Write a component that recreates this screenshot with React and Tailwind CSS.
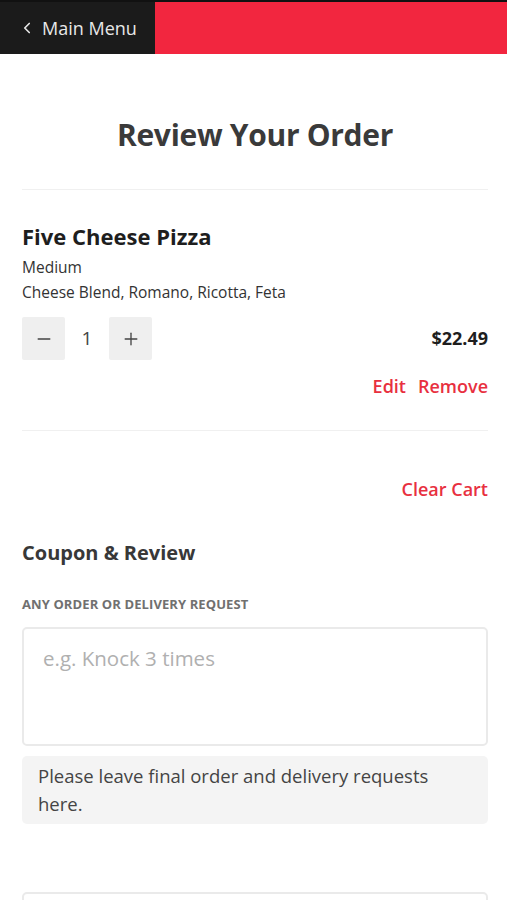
import { ChevronLeft, Minus, Plus } from 'lucide-react';

const font = { fontFamily: '"Open Sans", "Noto Sans", sans-serif' };

export default function App() {
  return (
    <div className="min-h-screen bg-white text-[#222]" style={font}>
      {/* Top bar */}
      <header className="flex h-[54px] border-t-2 border-[#111]">
        <button className="flex w-[155px] items-center gap-1.5 bg-[#1b1b1b] pl-[18px] text-[18px] text-[#e8e8e8]">
          <ChevronLeft className="h-[18px] w-[18px]" strokeWidth={2.2} />
          <span>Main Menu</span>
        </button>
        <div className="flex-1 bg-[#f2263f]" />
      </header>

      <div className="pl-[22px] pr-[19px]">
        <h1 className="pt-[61px] pb-[34px] text-center text-[30px] leading-[40px] font-bold tracking-[-0.3px] text-[#3a3a3a]">
          Review Your Order
        </h1>
        <hr className="border-t border-[#f0f0f0]" />

        {/* Cart item */}
        <div className="pt-[31px] pb-[32px]">
          <h2 className="text-[22px] font-bold leading-[30px] text-[#1e1e1e]">Five Cheese Pizza</h2>
          <p className="mt-[4px] text-[15.5px] leading-[25px] text-[#333]">Medium</p>
          <p className="text-[15.5px] leading-[25px] text-[#333]">Cheese Blend, Romano, Ricotta, Feta</p>

          <div className="mt-[12px] flex items-center justify-between">
            <div className="flex items-center">
              <button className="flex h-[43px] w-[43px] items-center justify-center rounded-[2px] bg-[#efefef] text-[#444]">
                <Minus className="h-5 w-5" strokeWidth={1.6} />
              </button>
              <span className="w-[44px] text-center text-[19px] text-[#444]">1</span>
              <button className="flex h-[43px] w-[43px] items-center justify-center rounded-[2px] bg-[#efefef] text-[#444]">
                <Plus className="h-5 w-5" strokeWidth={1.6} />
              </button>
            </div>
            <span className="text-[18px] font-bold text-[#1e1e1e]">$22.49</span>
          </div>

          <div className="mt-[14px] flex justify-end gap-[12px] text-[18px] leading-[24px] font-semibold text-[#e8303f]">
            <button>Edit</button>
            <button>Remove</button>
          </div>
        </div>
        <hr className="border-t border-[#f0f0f0]" />

        <div className="flex justify-end pt-[46px]">
          <button className="text-[18px] leading-[24px] font-semibold text-[#e8303f]">Clear Cart</button>
        </div>

        {/* Coupon & review */}
        <section className="pt-[38px]">
          <h3 className="text-[20px] leading-[28px] font-bold text-[#383838]">Coupon &amp; Review</h3>
          <label className="mt-[28px] block text-[13px] leading-[18px] font-bold uppercase tracking-[0.1px] text-[#707070]">
            Any order or delivery request
          </label>
          <textarea
            className="mt-[14px] block h-[119px] w-full resize-none rounded-[5px] border-2 border-[#eaeaea] px-[19px] py-[14px] text-[20.5px] text-[#333] placeholder:text-[#b0b0b0] outline-none"
            placeholder="e.g. Knock 3 times"
          />
          <div className="mt-[10px] rounded-[5px] bg-[#f4f4f4] py-[6px] pl-[16px] pr-[40px] text-[18.5px] leading-[28px] text-[#444]">
            Please leave final order and delivery requests here.
          </div>
        </section>

        <div className="mt-[68px] h-[60px] rounded-[5px] border-2 border-[#eaeaea]" />
      </div>
    </div>
  );
}
